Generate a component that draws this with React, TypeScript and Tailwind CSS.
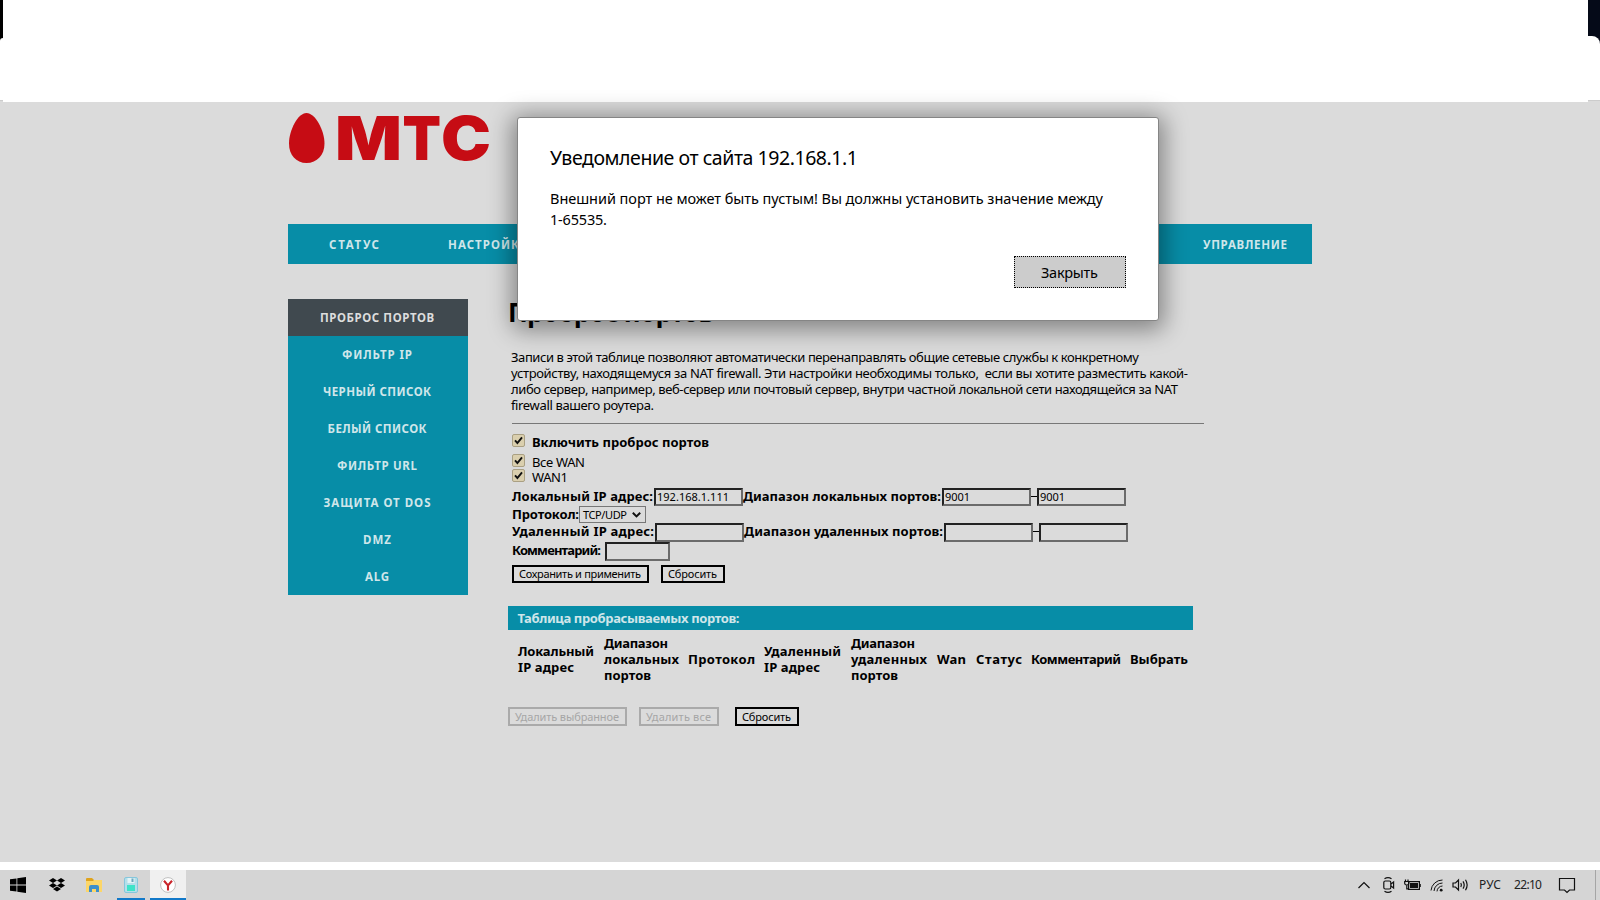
import { useLayoutEffect, useRef, useState } from "react";
import type { ReactNode } from "react";
import { clsx } from "clsx";

const NAV = "text-[11.5px] font-bold text-[#cfe6ea]";
const TEXT = "text-[13px] leading-4 text-black";
const BOLD = "text-[13px] leading-4 font-bold text-black";

interface FitProps {
  w: number;
  children: string;
  className?: string;
}

// Single line of text, tracked so that it fills a fixed width.
function Fit({ w, children, className }: FitProps) {
  const ref = useRef<HTMLSpanElement>(null);
  const [spacing, setSpacing] = useState(0);

  useLayoutEffect(() => {
    const el = ref.current;
    if (!el) return;
    el.style.letterSpacing = "0px";
    const natural = el.getBoundingClientRect().width;
    const next = (w - natural) / Math.max(1, children.length - 1);
    el.style.letterSpacing = `${next}px`;
    setSpacing(next);
  }, [w, children]);

  return (
    <span className={clsx("block shrink-0 whitespace-pre", className)} style={{ width: w }}>
      <span ref={ref} className="inline-block" style={{ letterSpacing: spacing }}>
        {children}
      </span>
    </span>
  );
}

const MENU = [
  { label: "ПРОБРОС ПОРТОВ", w: 114 },
  { label: "ФИЛЬТР IP", w: 70 },
  { label: "ЧЕРНЫЙ СПИСОК", w: 108 },
  { label: "БЕЛЫЙ СПИСОК", w: 99 },
  { label: "ФИЛЬТР URL", w: 80 },
  { label: "ЗАЩИТА ОТ DOS", w: 107 },
  { label: "DMZ", w: 28 },
  { label: "ALG", w: 24 },
];

const INTRO = [
  { text: "Записи в этой таблице позволяют автоматически перенаправлять общие сетевые службы к конкретному", w: 628 },
  { text: "устройству, находящемуся за NAT firewall. Эти настройки необходимы только,  если вы хотите разместить какой-", w: 677 },
  { text: "либо сервер, например, веб-сервер или почтовый сервер, внутри частной локальной сети находящейся за NAT", w: 667 },
  { text: "firewall вашего роутера.", w: 143 },
];

const COLUMNS = [
  { width: "w-[86px]", lines: [{ t: "Локальный", w: 76 }, { t: "IP адрес", w: 56 }] },
  { width: "w-[84px]", lines: [{ t: "Диапазон", w: 64 }, { t: "локальных", w: 75 }, { t: "портов", w: 47 }] },
  { width: "w-[76px]", lines: [{ t: "Протокол", w: 67 }] },
  { width: "w-[87px]", lines: [{ t: "Удаленный", w: 77 }, { t: "IP адрес", w: 56 }] },
  { width: "w-[86px]", lines: [{ t: "Диапазон", w: 64 }, { t: "удаленных", w: 76 }, { t: "портов", w: 47 }] },
  { width: "w-[39px]", lines: [{ t: "Wan", w: 29 }] },
  { width: "w-[55px]", lines: [{ t: "Статус", w: 46 }] },
  { width: "w-[99px]", lines: [{ t: "Комментарий", w: 90 }] },
  { width: "w-[58px]", lines: [{ t: "Выбрать", w: 58 }] },
];

function Logo() {
  return (
    <svg width="202" height="52" viewBox="0 0 202 52" fill="#c60c14" className="overflow-visible">
      <path d="M18.5 1C27 1 36.5 18 36.5 31.5 36.5 43 29 51 18.5 51S1 43 1 31.5C1 18 10 1 18.5 1Z" />
      <g fontFamily="Inter, 'Liberation Sans', sans-serif" fontWeight="900" fontSize="61">
        <text x="47" y="48" textLength="67" lengthAdjust="spacingAndGlyphs">М</text>
        <text x="114.5" y="48" textLength="38.5" lengthAdjust="spacingAndGlyphs">Т</text>
        <text x="153" y="48" textLength="50" lengthAdjust="spacingAndGlyphs">С</text>
      </g>
    </svg>
  );
}

function Checkbox() {
  return (
    <span className="flex h-[13px] w-[13px] shrink-0 items-center justify-center rounded-[2px] border border-[#aaa083] bg-[#dacfae]">
      <svg width="9" height="9" viewBox="0 0 9 9" fill="none" stroke="#111" strokeWidth="1.9">
        <path d="M1 4.3 3.4 7 8 1.3" />
      </svg>
    </span>
  );
}

interface FieldProps {
  size: string;
  value?: string;
  w?: number;
}

function Field({ size, value, w = 0 }: FieldProps) {
  return (
    <span
      className={clsx(
        "block shrink-0 border-2 border-t-[#222] border-l-[#222] border-r-[#6b6b6b] border-b-[#6b6b6b] pl-px",
        size,
      )}
    >
      {value && <Fit w={w} className="text-[11px] leading-[14px] text-black">{value}</Fit>}
    </span>
  );
}

interface ButtonProps {
  size: string;
  w: number;
  disabled?: boolean;
  children: string;
}

function Button({ size, w, disabled, children }: ButtonProps) {
  return (
    <button
      type="button"
      disabled={disabled}
      className={clsx(
        "flex shrink-0 items-center justify-center border-2 pr-px",
        disabled ? "border-[#aaa] text-[#a6a6a6]" : "border-black text-black",
        size,
      )}
    >
      <Fit w={w} className="text-left text-[11px] leading-[14px]">{children}</Fit>
    </button>
  );
}

function Sidebar() {
  return (
    <aside className="mt-[35px] h-[296px] w-[180px] shrink-0 bg-[#078da7]">
      {MENU.map((m, i) => (
        <div
          key={m.label}
          className={clsx("flex h-[37px] items-center justify-center pt-px pr-[2px]", NAV, i === 0 && "bg-[#40494f] text-[#dddddd]")}
        >
          <Fit w={m.w}>{m.label}</Fit>
        </div>
      ))}
    </aside>
  );
}

function ForwardingForm() {
  return (
    <div className="pl-1">
      <div className="flex h-5 items-start gap-[7px]">
        <Checkbox />
        <Fit w={177} className={BOLD}>Включить проброс портов</Fit>
      </div>
      <div className="flex h-[15px] items-start gap-[7px]">
        <Checkbox />
        <Fit w={53} className={TEXT}>Все WAN</Fit>
      </div>
      <div className="flex h-[19px] items-start gap-[7px]">
        <Checkbox />
        <Fit w={36} className={TEXT}>WAN1</Fit>
      </div>
      <div className="flex h-[18px] items-start">
        <Fit w={141} className={BOLD}>Локальный IP адрес:</Fit>
        <span className="w-px" />
        <Field size="h-[18px] w-[89px]" value="192.168.1.111" w={72} />
        <Fit w={198} className={BOLD}>Диапазон локальных портов:</Fit>
        <span className="w-px" />
        <Field size="h-[18px] w-[89px]" value="9001" w={25} />
        <span className="mt-2 h-px w-[6px] bg-black" />
        <Field size="h-[18px] w-[89px]" value="9001" w={25} />
      </div>
      <div className="flex h-[17px] items-start">
        <Fit w={67} className={BOLD}>Протокол:</Fit>
        <span className="flex h-[17px] w-[67px] items-center gap-[5px] border border-[#777] pl-[3px]">
          <Fit w={44} className="text-[11px] leading-[15px] text-black">TCP/UDP</Fit>
          <svg width="9" height="6" viewBox="0 0 9 6" fill="none" stroke="#111" strokeWidth="2">
            <path d="M.8.8 4.5 4.4 8.2.8" />
          </svg>
        </span>
      </div>
      <div className="flex h-[19px] items-start">
        <Fit w={142} className={BOLD}>Удаленный IP адрес:</Fit>
        <span className="w-px" />
        <Field size="h-[19px] w-[89px]" />
        <Fit w={199} className={BOLD}>Диапазон удаленных портов:</Fit>
        <span className="w-px" />
        <Field size="h-[19px] w-[89px]" />
        <span className="mt-2 h-px w-[6px] bg-black" />
        <Field size="h-[19px] w-[89px]" />
      </div>
      <div className="flex h-[19px] items-start gap-1">
        <Fit w={89} className={BOLD}>Комментарий:</Fit>
        <Field size="h-[19px] w-[65px]" />
      </div>
      <div className="mt-1 flex gap-3">
        <Button size="h-[18px] w-[137px]" w={122}>Сохранить и применить</Button>
        <Button size="h-[18px] w-[64px]" w={49}>Сбросить</Button>
      </div>
    </div>
  );
}

function PortTable() {
  return (
    <div className="mt-[23px] w-[685px]">
      <div className="h-6 bg-[#078da7] pt-1 pl-[9.5px]">
        <Fit w={222} className="text-[13px] leading-4 font-bold text-[#cfe6ea]">Таблица пробрасываемых портов:</Fit>
      </div>
      <div className="mt-[5px] flex h-12 items-center pl-[10px]">
        {COLUMNS.map((c, i) => (
          <div key={i} className={clsx("shrink-0", c.width)}>
            {c.lines.map((l) => (
              <Fit key={l.t} w={l.w} className={BOLD}>{l.t}</Fit>
            ))}
          </div>
        ))}
      </div>
      <div className="mt-6 flex">
        <Button size="h-[19px] w-[119px]" w={104} disabled>Удалить выбранное</Button>
        <span className="w-3" />
        <Button size="h-[19px] w-[80px]" w={65} disabled>Удалить все</Button>
        <span className="w-4" />
        <Button size="h-[19px] w-[64px]" w={49}>Сбросить</Button>
      </div>
    </div>
  );
}

function Dialog() {
  return (
    <div className="absolute top-[117px] left-[517px] h-[204px] w-[642px] rounded-[3px] border border-[#858585] bg-white px-8 pt-[29px] shadow-[0_4px_23px_5px_rgba(0,0,0,0.4)]">
      <Fit w={308} className="text-[19.5px] leading-[21px] text-black">Уведомление от сайта 192.168.1.1</Fit>
      <div className="mt-[20px] text-[14.5px] leading-[21px] text-black">
        <Fit w={553}>Внешний порт не может быть пустым! Вы должны установить значение между</Fit>
        <Fit w={57}>1-65535.</Fit>
      </div>
      <div className="mt-[26px] flex justify-end">
        <button type="button" className="flex h-8 w-28 items-center justify-center border border-dotted border-black bg-[#cccccc] pt-px pr-px text-[14.5px] text-black">
          <Fit w={57} className="text-left">Закрыть</Fit>
        </button>
      </div>
    </div>
  );
}

function TrayIcon({ w, children }: { w: number; children: ReactNode }) {
  return (
    <svg width={w} height="18" viewBox={`0 0 ${w} 18`} fill="none" stroke="#111" strokeWidth="1.2" className="shrink-0">
      {children}
    </svg>
  );
}

function Taskbar() {
  return (
    <footer className="flex h-[30px] items-center bg-[#d5d5d5]">
      <svg width="16" height="16" viewBox="0 0 16 16" className="ml-[10px]">
        <path d="M0 2.3 6.5 1.4V7.6H0ZM7.3 1.3 16 0V7.6H7.3ZM0 8.4H6.5V14.6L0 13.7ZM7.3 8.4H16V16L7.3 14.7Z" />
      </svg>
      <svg width="16" height="14" viewBox="0 0 16 14" className="ml-[23px]">
        <path d="M4 0 8 2.5 4 5 0 2.5ZM12 0 16 2.5 12 5 8 2.5ZM4 5 8 7.5 4 10 0 7.5ZM12 5 16 7.5 12 10 8 7.5ZM4 11 8 8.5 12 11 8 13.6Z" />
      </svg>
      <svg width="17" height="15" viewBox="0 0 17 15" className="ml-[21px]">
        <path d="M0 1Q0 0 1 0H6L8 2H16V5H0Z" fill="#dfa31c" />
        <path d="M0 3H7L8 2H16V14H0Z" fill="#fcd668" />
        <path d="M3 14V9Q3 7 5 7H11Q13 7 13 9V14H10V11H6V14Z" fill="#3e8fca" />
      </svg>
      <div className="ml-[14px] flex h-[30px] w-7 flex-col items-center border-b-2 border-[#1279c9] pt-[7px]">
        <svg width="14" height="16" viewBox="0 0 14 16">
          <rect x=".5" y=".5" width="13" height="15" rx="1.5" fill="#b4dfea" stroke="#86c6dc" />
          <rect x="3.5" y="1" width="7" height="5" fill="#e4f2f5" />
          <rect x="7.5" y="1.5" width="2" height="3.5" fill="#6aa9be" />
          <rect x="3" y="8" width="8" height="6" fill="#3ee3c8" />
        </svg>
      </div>
      <div className="ml-[5px] flex h-[30px] w-9 flex-col items-center border-b-2 border-[#1279c9] bg-[#f0f0f0] pt-[7px]">
        <svg width="16" height="16" viewBox="0 0 16 16" fill="none">
          <circle cx="8" cy="8" r="7.4" fill="#fff" stroke="#b9b9b9" strokeWidth=".9" />
          <path d="M4 3.8 8 8.5 12 3.8M8 8.2V13.6" stroke="#c9252b" strokeWidth="2.1" />
        </svg>
      </div>

      <div className="ml-auto flex items-center">
        <TrayIcon w={14}>
          <path d="M1.5 12 7 6.5 12.5 12" />
        </TrayIcon>
        <span className="w-[11px]" />
        <TrayIcon w={14}>
          <rect x="1.8" y="5" width="7" height="8" rx="1.5" />
          <path d="M9 8 11.6 6V12L9 10M2.5 2.8Q6 .4 9.5 2.8M2.5 15.2Q6 17.6 9.5 15.2" />
        </TrayIcon>
        <span className="w-2" />
        <TrayIcon w={18}>
          <rect x="4.6" y="5.6" width="10.8" height="7.8" />
          <rect x="6" y="7" width="8" height="5" fill="#111" stroke="none" />
          <path d="M16.2 8V11M1.5 3.5V5.5M4 3.5V5.5M.7 5.5H4.8V7.5Q4.8 9 2.8 9T.7 7.5ZM2.8 9V12.8H4.6" />
        </TrayIcon>
        <span className="w-[8px]" />
        <TrayIcon w={14}>
          <path d="M1 14.5A11.5 11.5 0 0 1 12.5 4M4 15A8.6 8.6 0 0 1 12.5 7M7 15.4A5.6 5.6 0 0 1 12.5 10" strokeWidth="1" />
          <circle cx="11.2" cy="14.2" r="1.4" fill="#111" stroke="none" />
        </TrayIcon>
        <span className="w-2" />
        <TrayIcon w={18}>
          <path d="M1 7H3.5L6.5 4V14L3.5 11H1ZM8.8 7Q10 9 8.8 11M11 5.3Q13.4 9 11 12.7M13.5 3.8Q16.8 9 13.5 14.2" />
        </TrayIcon>
        <Fit w={22} className="ml-[9px] text-[12px] text-[#222]">РУС</Fit>
        <Fit w={28} className="ml-[13px] text-[12px] text-[#222]">22:10</Fit>
        <span className="w-[16px]" />
        <TrayIcon w={18}>
          <path d="M1.5 2.5H16.5V14H11.5L9 16.5 6.5 14H1.5Z" />
        </TrayIcon>
        <span className="mr-1 ml-[19px] h-[30px] w-px bg-[#a5a5a5]" />
      </div>
    </footer>
  );
}

export default function App() {
  return (
    <div className="relative flex h-[900px] w-[1600px] flex-col overflow-hidden bg-white font-['Noto_Sans','Liberation_Sans',sans-serif]">
      <header className="flex h-[102px] flex-col">
        <div className="flex h-9 justify-between">
          <span className="h-[42px] w-[3px] bg-black">
            <span className="mt-[38px] block h-1 w-[3px] rounded-tl-[3px] bg-white" />
          </span>
          <span className="h-9 w-3 bg-[#050a18]" />
        </div>
        <div className="flex h-2 justify-end">
          <span className="h-2 w-3 bg-[#050a18]">
            <span className="block h-2 w-3 rounded-tr-lg bg-white" />
          </span>
        </div>
        <div className="mt-auto flex h-[2px] justify-between">
          <span className="w-[3px] border-t border-[#ccc] bg-[#dbdbdb]" />
          <span className="w-3 border-t border-[#ccc] bg-[#dbdbdb]" />
        </div>
      </header>

      <main className="h-[760px] bg-[#dbdbdb]">
        <div className="mx-auto w-[1024px]">
          <div className="h-[122px] pt-[10px]">
            <Logo />
          </div>
          <nav className="flex h-10 items-center bg-[#078da7] pt-px pr-[25px] pl-[41px]">
            <Fit w={50} className={NAV}>СТАТУС</Fit>
            <Fit w={80} className={clsx("ml-[69px]", NAV)}>НАСТРОЙКА</Fit>
            <Fit w={84} className={clsx("ml-auto", NAV)}>УПРАВЛЕНИЕ</Fit>
          </nav>
          <div className="flex">
            <Sidebar />
            <section className="ml-10 w-[696px] pt-[33px]">
              <Fit w={206} className="text-[26px] leading-[30px] font-bold text-black">Проброс портов</Fit>
              <div className="mt-[22px] pl-[3px]">
                {INTRO.map((l) => (
                  <Fit key={l.text} w={l.w} className={TEXT}>{l.text}</Fit>
                ))}
              </div>
              <hr className="mt-[10px] mb-[10px] ml-1 w-[692px] border-[#777]" />
              <ForwardingForm />
              <PortTable />
            </section>
          </div>
        </div>
      </main>

      <div className="h-2 bg-white" />
      <Taskbar />
      <Dialog />
    </div>
  );
}
